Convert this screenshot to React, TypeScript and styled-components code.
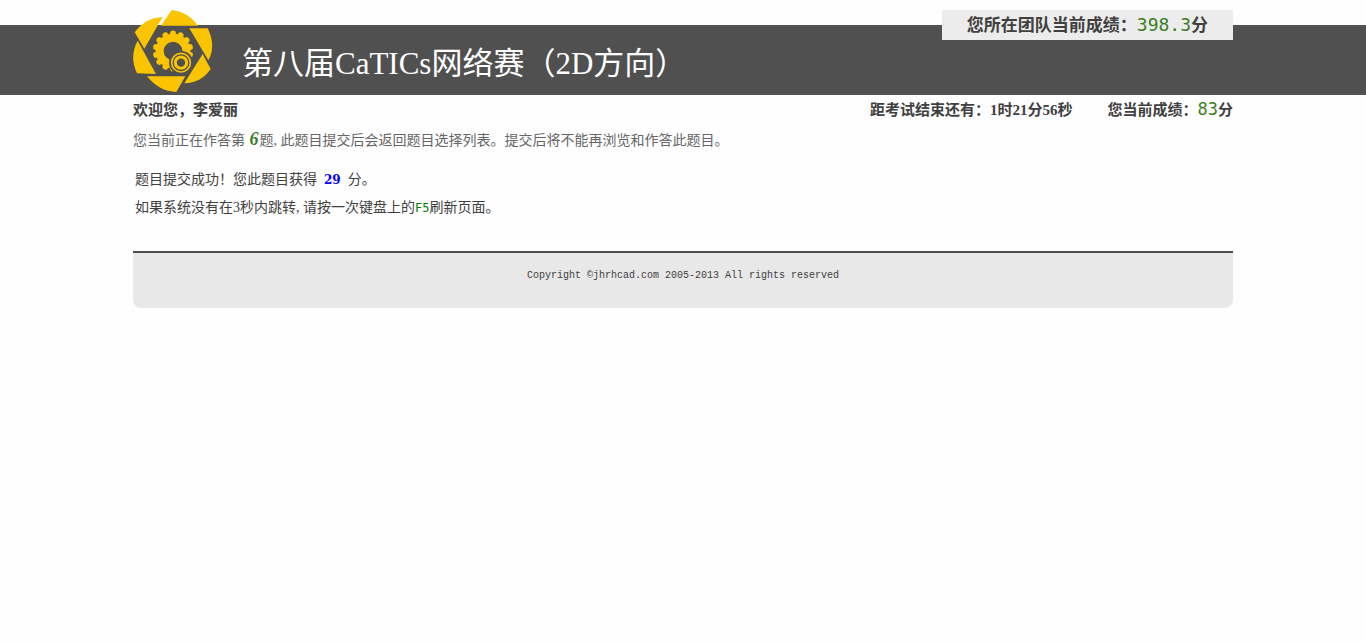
import React from "react";
import styled, { createGlobalStyle } from "styled-components";

const GlobalStyle = createGlobalStyle`
  * { box-sizing: border-box; }
  body {
    margin: 0;
    background: #fefefe;
    color: #404040;
    font-family: "Liberation Serif", "Noto Sans CJK SC", serif;
    font-size: 14px;
    line-height: 28px;
  }
`;

const Container = styled.div`
  position: relative;
  max-width: 1100px;
  margin: 0 auto;
`;

const Header = styled.header`
  margin-top: 25px;
  background: #505050;
`;

const Brand = styled(Container)`
  display: flex;
  align-items: flex-start;
  gap: 29px;
  height: 70px;
`;

const Logo = styled.svg`
  flex: none;
  width: 80px;
  height: 82px;
  margin-top: -15px;
`;

const Title = styled.h1`
  margin: 17px 0 0;
  color: #fff;
  font-size: 31px;
  font-weight: 400;
  line-height: 44px;
`;

const TeamScore = styled.div`
  position: absolute;
  top: -15px;
  right: 0;
  padding: 2px 25px 0;
  background: #ececec;
  font-size: 17px;
  font-weight: 700;
  line-height: 28px;
`;

const Score = styled.span<{ $size: number }>`
  color: #3a7d1e;
  font-family: "DejaVu Sans Mono", monospace;
  font-size: ${(p) => p.$size}px;
  font-weight: 400;
  line-height: 1;
`;

const StatusBar = styled.div`
  display: flex;
  gap: 35px;
  padding-top: 1px;
  font-size: 15px;
  font-weight: 700;
`;

const Welcome = styled.span`
  flex: 1;
`;

const Notice = styled.p`
  margin: 3px 0 0;
  color: #666;
`;

const Question = styled.em`
  margin: 0 1px;
  color: #3a7d1e;
  font-family: "Liberation Serif", serif;
  font-size: 18px;
  font-weight: 700;
  line-height: 1;
`;

const Result = styled.main`
  padding: 11px 2px 29px;
`;

const Line = styled.p`
  margin: 0;
`;

const Points = styled.strong`
  margin: 0 7px;
  color: #0000ff;
  font-family: "DejaVu Serif", serif;
  font-size: 12px;
  line-height: 1;
`;

const Key = styled.span`
  color: #008000;
  font-family: "DejaVu Sans Mono", monospace;
  font-size: 12px;
  line-height: 1;
`;

const Footer = styled.footer`
  height: 57px;
  padding-top: 12px;
  border-top: 2px solid #505050;
  border-radius: 0 0 8px 8px;
  background: #e8e8e8;
  font-family: "Liberation Mono", monospace;
  font-size: 10px;
  line-height: 22px;
  text-align: center;
`;

const TEETH = Array.from({ length: 14 }, (_, i) => (i * 360) / 14);

function GearLogo() {
  return (
    <Logo viewBox="30 30 240 246" aria-hidden="true">
      <g fill="#fac400">
        <path d="M146 30Q194 35 226 77L114 77Z" />
        <path d="M35 97Q66 54 119 51L64 146Z" />
        <path d="M44 122L99 222L42 220Q18 170 44 122Z" />
        <path d="M72 229L187 229L160 276Q108 274 72 229Z" />
        <path d="M239 162L263 207Q236 248 184 250Z" />
        <path d="M199 85L254 85Q280 137 256 181Z" />
        {TEETH.map((angle) => (
          <path key={angle} d="M139 106L143 94Q150 89 157 94L161 106Z" transform={`rotate(${angle} 150 153)`} />
        ))}
      </g>
      <circle cx="150" cy="153" r="40" fill="none" stroke="#fac400" strokeWidth="24" />
      <circle cx="174" cy="188" r="36" fill="#505050" />
      <circle cx="174" cy="188" r="28" fill="none" stroke="#fac400" strokeWidth="5" />
      <circle cx="174" cy="188" r="17" fill="none" stroke="#fac400" strokeWidth="9" />
    </Logo>
  );
}

export default function App() {
  return (
    <>
      <GlobalStyle />
      <Header>
        <Brand>
          <GearLogo />
          <Title>第八届CaTICs网络赛（2D方向）</Title>
          <TeamScore>
            您所在团队当前成绩：<Score $size={18}>398.3</Score>分
          </TeamScore>
        </Brand>
      </Header>
      <Container>
        <StatusBar>
          <Welcome>欢迎您，李爱丽</Welcome>
          <span>距考试结束还有：1时21分56秒</span>
          <span>
            您当前成绩：<Score $size={17}>83</Score>分
          </span>
        </StatusBar>
        <Notice>
          您当前正在作答第 <Question>6</Question>题, 此题目提交后会返回题目选择列表。提交后将不能再浏览和作答此题目。
        </Notice>
        <Result>
          <Line>
            题目提交成功！您此题目获得<Points>29</Points>分。
          </Line>
          <Line>
            如果系统没有在3秒内跳转, 请按一次键盘上的<Key>F5</Key>刷新页面。
          </Line>
        </Result>
        <Footer>Copyright ©jhrhcad.com 2005-2013 All rights reserved</Footer>
      </Container>
    </>
  );
}
